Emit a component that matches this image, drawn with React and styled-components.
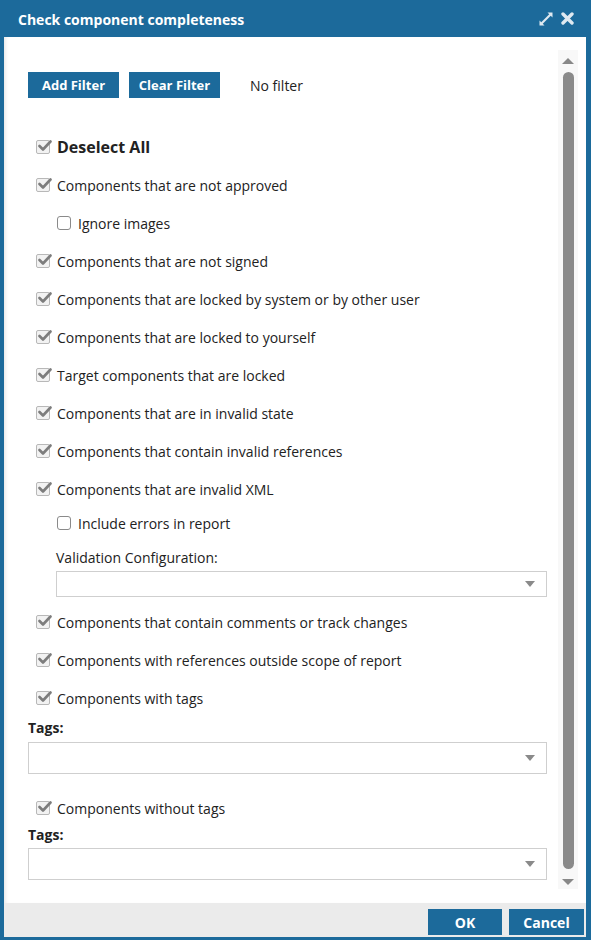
import React from 'react'
import styled, { createGlobalStyle } from 'styled-components'

const GlobalStyle = createGlobalStyle`
  html, body {
    margin: 0;
    padding: 0;
    background: #1c6a9b;
  }
  body {
    font-family: 'Open Sans', 'Liberation Sans', sans-serif;
    color: #222;
  }
`;

const BLUE = '#1c6a9b';

// whole dialog frame
const Dialog = styled.div`
  width: 591px;
  height: 940px;
  background: ${BLUE};
  display: flex;
  flex-direction: column;
  box-sizing: border-box;
  padding: 0 5px 3px 4px;
`;

const TitleBar = styled.div`
  height: 37px;
  display: flex;
  align-items: center;
  padding: 0 12px 0 14px;
  color: #fff;
  font-weight: 700;
  font-size: 14px;
  flex-shrink: 0;
`;

const Title = styled.div`
  flex: 1;
  padding-top: 1px;
`;

const TitleIcons = styled.div`
  display: flex;
  align-items: center;
  gap: 7px;
`;

const Body = styled.div`
  flex: 1;
  background: #fff;
  display: flex;
  min-height: 0;
  box-shadow: inset 4px 0 4px -3px rgba(0,0,0,0.12);
`;

const Content = styled.div`
  flex: 1;
  padding: 35px 11px 0 24px;
`;

// decorative scrollbar on the right
const ScrollTrack = styled.div`
  width: 20px;
  margin: 13px 8px 14px 0;
  background: #f8f8f8;
  display: flex;
  flex-direction: column;
  align-items: center;
`;

const Arrow = styled.div`
  width: 0;
  height: 0;
  border-left: 6px solid transparent;
  border-right: 6px solid transparent;
  ${p => p.down ? `border-top: 6px solid #888;` : `border-bottom: 6px solid #888;`}
  margin: ${p => p.down ? '10px 0 4px' : '8px 0 8px'};
`;

const Thumb = styled.div`
  width: 11px;
  flex: 1;
  background: #8a8a8a;
  border-radius: 6px;
`;

const Toolbar = styled.div`
  display: flex;
  align-items: center;
  gap: 10px;
  height: 26px;
  margin-bottom: 30px;
`;

const Button = styled.button`
  background: ${BLUE};
  color: #fff;
  border: none;
  font-family: inherit;
  font-weight: 700;
  font-size: 13px;
  height: 26px;
  padding: 0;
  width: ${p => p.w || '91px'};
  cursor: pointer;
`;

const FilterText = styled.span`
  font-size: 14px;
  margin-left: 20px;
`;

const Row = styled.div`
  display: flex;
  align-items: center;
  height: ${p => p.h || 38}px;
  padding-left: ${p => p.sub ? 29 : 8}px;
  font-size: ${p => p.big ? 16 : 14}px;
  font-weight: ${p => p.big ? 700 : 400};
  gap: 7px;
`;

const Box = styled.span`
  width: 14px;
  height: 14px;
  box-sizing: border-box;
  border: 1px solid ${p => p.checked ? '#b8b8b8' : '#8a8a8a'};
  border-radius: ${p => p.checked ? 2 : 3}px;
  background: ${p => p.checked ? '#f2f2f2' : '#fff'};
  position: relative;
  flex-shrink: 0;
  svg {
    position: absolute;
    left: 1px;
    top: -2px;
  }
`;

const Label = styled.div`
  font-size: 14px;
  font-weight: ${p => p.bold ? 700 : 400};
  line-height: 18px;
  padding-left: ${p => p.indent ? 28 : 0}px;
  margin-top: ${p => p.mt || 0}px;
`;

const SelectBox = styled.div`
  margin: ${p => p.mt ?? 5}px 0 0 ${p => p.indent ? 28 : 0}px;
  height: ${p => p.h || 32}px;
  border: 1px solid #cfcfcf;
  box-sizing: border-box;
  display: flex;
  align-items: center;
  justify-content: flex-end;
  padding-right: 11px;
  &::after {
    content: '';
    border-left: 5px solid transparent;
    border-right: 5px solid transparent;
    border-top: 6px solid #8a8a8a;
  }
`;

const Spacer = styled.div`
  height: ${p => p.h}px;
`;

const Footer = styled.div`
  height: 34px;
  background: #ebebeb;
  display: flex;
  justify-content: flex-end;
  align-items: flex-end;
  gap: 7px;
  padding: 0 2px 2px 0;
  box-sizing: border-box;
  flex-shrink: 0;
`;

const FooterButton = styled(Button)`
  font-size: 14px;
`;

const Check = ({ checked }) => (
  <Box checked={checked}>
    {checked && (
      <svg width="14" height="13" viewBox="0 0 14 13">
        <path d="M1.5 7 L5 10.5 L12.5 2.5" fill="none" stroke="#7d7d7d" strokeWidth="2.6" strokeLinecap="round" strokeLinejoin="round" />
      </svg>
    )}
  </Box>
);

const Option = ({ text, checked = true, sub, big, h }) => (
  <Row sub={sub} big={big} h={h}>
    <Check checked={checked} />
    <span>{text}</span>
  </Row>
);

const ExpandIcon = () => (
  <svg width="16" height="16" viewBox="0 0 16 16">
    <path d="M9.5 1.5 H14.5 V6.5 Z" fill="#dfe9f1" />
    <path d="M1.5 9.5 V14.5 H6.5 Z" fill="#dfe9f1" />
    <path d="M12.5 3.5 L3.5 12.5" stroke="#dfe9f1" strokeWidth="2.2" />
  </svg>
);

const CloseIcon = () => (
  <svg width="13" height="13" viewBox="0 0 13 13">
    <path d="M2 2 L11 11 M11 2 L2 11" stroke="#dfe9f1" strokeWidth="3.4" strokeLinecap="round" />
  </svg>
);

export default function App() {
  return (
    <>
      <GlobalStyle />
      <Dialog>
        <TitleBar>
          <Title>Check component completeness</Title>
          <TitleIcons>
            <ExpandIcon />
            <CloseIcon />
          </TitleIcons>
        </TitleBar>

        <Body>
          <Content>
            <Toolbar>
              <Button>Add Filter</Button>
              <Button>Clear Filter</Button>
              <FilterText>No filter</FilterText>
            </Toolbar>

            <Option big text="Deselect All" />
            <Option text="Components that are not approved" />
            <Option sub checked={false} text="Ignore images" />
            <Option text="Components that are not signed" />
            <Option text="Components that are locked by system or by other user" />
            <Option text="Components that are locked to yourself" />
            <Option text="Target components that are locked" />
            <Option text="Components that are in invalid state" />
            <Option text="Components that contain invalid references" />
            <Option text="Components that are invalid XML" />
            <Option sub checked={false} h={30} text="Include errors in report" />
            <Label indent mt={11}>Validation Configuration:</Label>
            <SelectBox indent h={26} mt={4} />

            <Spacer h={6} />
            <Option text="Components that contain comments or track changes" />
            <Option text="Components with references outside scope of report" />
            <Option text="Components with tags" />
            <Label bold mt={2}>Tags:</Label>
            <SelectBox />

            <Spacer h={16} />
            <Option h={36} text="Components without tags" />
            <Label bold>Tags:</Label>
            <SelectBox mt={4} />
          </Content>

          <ScrollTrack>
            <Arrow />
            <Thumb />
            <Arrow down />
          </ScrollTrack>
        </Body>

        <Footer>
          <FooterButton w="74px">OK</FooterButton>
          <FooterButton w="75px">Cancel</FooterButton>
        </Footer>
      </Dialog>
    </>
  );
}
